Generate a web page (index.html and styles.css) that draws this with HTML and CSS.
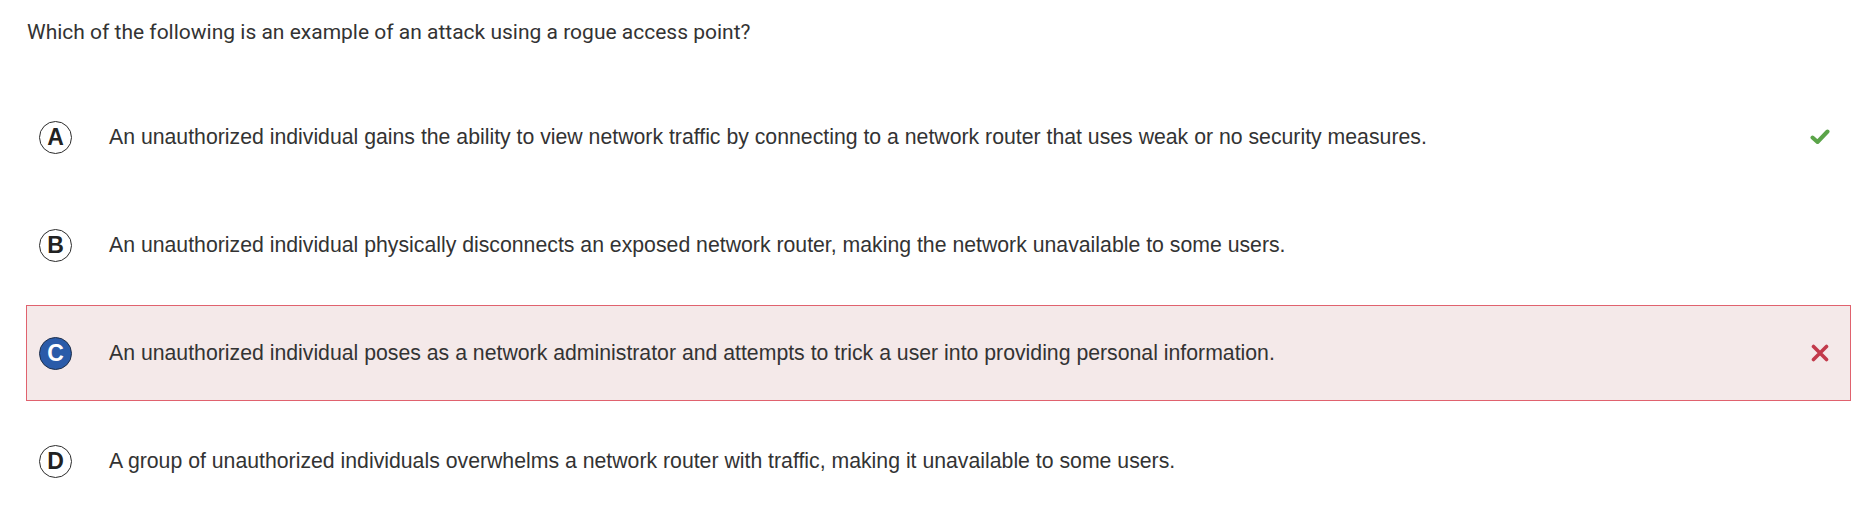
FILE: index.html
```html
<!DOCTYPE html>
<html>
<head>
<meta charset="utf-8">
<link rel="stylesheet" href="styles.css">
</head>
<body>
<div class="page">
  <p class="question">Which of the following is an example of an attack using a rogue access point?</p>
  <div class="options">
    <div class="option">
      <span class="letter">A</span>
      <span class="text">An unauthorized individual gains the ability to view network traffic by connecting to a network router that uses weak or no security measures.</span>
      <span class="mark">
        <svg width="20" height="16" viewBox="0 0 20 16"><path d="M2.5 8.5 L7.5 13 L17.5 2.5" fill="none" stroke="#5ba449" stroke-width="4" stroke-linecap="round" stroke-linejoin="round"/></svg>
      </span>
    </div>
    <div class="option">
      <span class="letter">B</span>
      <span class="text">An unauthorized individual physically disconnects an exposed network router, making the network unavailable to some users.</span>
      <span class="mark"></span>
    </div>
    <div class="option wrong">
      <span class="letter selected">C</span>
      <span class="text">An unauthorized individual poses as a network administrator and attempts to trick a user into providing personal information.</span>
      <span class="mark">
        <svg width="18" height="18" viewBox="0 0 18 18"><path d="M2.5 2.5 L15.5 15.5 M15.5 2.5 L2.5 15.5" fill="none" stroke="#c23a4b" stroke-width="3.6" stroke-linecap="round"/></svg>
      </span>
    </div>
    <div class="option">
      <span class="letter">D</span>
      <span class="text">A group of unauthorized individuals overwhelms a network router with traffic, making it unavailable to some users.</span>
      <span class="mark"></span>
    </div>
  </div>
</div>
</body>
</html>
```

FILE: styles.css
```css
html, body {
  margin: 0;
  padding: 0;
  background: #ffffff;
}
.page {
  padding: 0 25px 0 26px;
}
.question {
  margin: 0;
  padding-top: 20px;
  padding-left: 1px;
  height: 89px;
  box-sizing: border-box;
  font-family: Roboto, "Liberation Sans", sans-serif;
  font-size: 21px;
  line-height: 24px;
  color: #333333;
}
.options {
  display: flex;
  flex-direction: column;
  gap: 12px;
}
.option {
  height: 96px;
  box-sizing: border-box;
  display: flex;
  align-items: center;
  padding: 0 20px 0 12px;
  border: 1px solid transparent;
}
.option.wrong {
  background: #f4e9e9;
  border-color: #e0626e;
}
.letter {
  flex: 0 0 auto;
  width: 33px;
  height: 33px;
  box-sizing: border-box;
  border: 1.5px solid #2b2b2b;
  border-radius: 50%;
  display: flex;
  align-items: center;
  justify-content: center;
  font-family: "Liberation Sans", Arial, sans-serif;
  font-weight: bold;
  font-size: 23px;
  color: #222222;
  margin-right: 37px;
}
.letter.selected {
  background: #2a5ba9;
  border-color: #1f2f4a;
  color: #ffffff;
}
.text {
  flex: 1 1 auto;
  font-family: "Liberation Sans", Arial, sans-serif;
  font-size: 21.25px;
  color: #333333;
  line-height: 24px;
}
.mark {
  flex: 0 0 auto;
  width: 20px;
  height: 20px;
  display: flex;
  align-items: center;
  justify-content: center;
}
```
